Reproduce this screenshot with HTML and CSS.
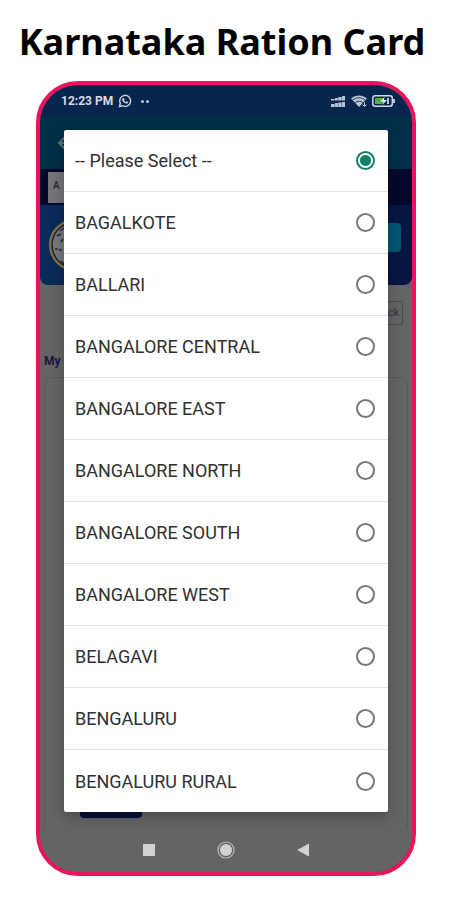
FILE: index.html
```html
<!DOCTYPE html>
<html lang="en">
<head>
<meta charset="utf-8">
<meta name="viewport" content="width=device-width, initial-scale=1">
<title>Karnataka Ration Card</title>
<link rel="stylesheet" href="styles.css">
</head>
<body>
<h1 class="title">Karnataka Ration Card</h1>
<main class="phone">
  <div class="app">
    <header class="status">
      <span>12:23 PM</span>
      <svg class="chat" viewBox="0 0 14 14" width="14" height="14" aria-hidden="true"><path d="M1.500 12.500l.8-3A5.500 5.500 0 1 1 4.500 11.700z" fill="none" stroke="#c3ccda" stroke-width="1.500"/><path d="M4.600 4.200l1.200-.3.800 1.700-.6.7c.5.9 1 1.300 1.800 1.700l.8-.8 1.600.9c-.2 1.300-1.200 1.800-2.400 1.400C5.700 8.800 4.300 7.200 4.100 5.700c0-.6.2-1.100.5-1.500z" fill="#c3ccda"/></svg>
      <span class="dots" aria-hidden="true"><i></i><i></i></span>
      <svg class="signal" viewBox="0 0 15 12" width="15" height="12" aria-hidden="true"><path d="M0 4h4V3h3V2h4V1h3v4.500H0zM0 9h4V8h3V7.500h4V7h3v5H0z" fill="#b9c3d3"/><path d="M3.700 0v12M7.200 0v12M10.700 0v12" stroke="#06264d" stroke-width=".4"/></svg>
      <svg viewBox="0 0 16 12" width="16" height="12" aria-hidden="true"><path d="M0 3.500C4.500-.5 11.500-.5 16 3.500L8 12z" fill="#b9c3d3"/><path d="M1.500 5.200C5.500 2 10.500 2 14.500 5.200M4 7.600c2.500-1.800 5.500-1.800 8 0" fill="none" stroke="#06264d" stroke-width=".8"/><path d="M13.500 7v4.500M11.500 9.500l2 2 2-2" fill="none" stroke="#b9c3d3"/></svg>
      <svg viewBox="0 0 24 12" width="24" height="12" aria-hidden="true"><rect x=".8" y=".8" width="19.500" height="10.400" rx="2.500" fill="none" stroke="#d0d7e0" stroke-width="1.500"/><path d="M3 3h9l-2 6H3z" fill="#55ad3a"/><path d="M12.500 2L8.500 6.500h3L10 10l5-5h-3z" fill="#fff"/><path d="M16 3v6M22 4v4" stroke="#d0d7e0" stroke-width="1.800"/></svg>
    </header>
    <div class="appbar"><svg viewBox="0 0 16 16" width="16" height="16" aria-hidden="true"><path d="M8 2L2 8l6 6M2 8h14" fill="none" stroke="#5f7077" stroke-width="2"/></svg></div>
    <div class="band"><span class="lang">A</span></div>
    <div class="hero">
      <svg viewBox="0 0 54 54" width="54" height="54" aria-hidden="true"><circle cx="27" cy="27" r="25" fill="#75777c" stroke="#87733a" stroke-width="2"/><circle cx="27" cy="27" r="23" fill="none" stroke="#1c2036" stroke-width="1.500"/><path d="M12 13l4-3M9 18l4-2M13 24l2-3M7 31h3m1 1h3M13 43l3 3" stroke="#22263a" stroke-width="1.500"/></svg>
      <span class="chip"></span>
    </div>
    <div class="toolbar"><span class="back">Back</span></div>
    <div class="heading">My Details</div>
    <div class="panel"><span class="submit"></span></div>
  </div>
  <div class="overlay">
    <form class="dialog" aria-label="District">
      <label class="row"><span>-- Please Select --</span><input type="radio" name="district" checked></label>
      <label class="row"><span>BAGALKOTE</span><input type="radio" name="district"></label>
      <label class="row"><span>BALLARI</span><input type="radio" name="district"></label>
      <label class="row"><span>BANGALORE CENTRAL</span><input type="radio" name="district"></label>
      <label class="row"><span>BANGALORE EAST</span><input type="radio" name="district"></label>
      <label class="row"><span>BANGALORE NORTH</span><input type="radio" name="district"></label>
      <label class="row"><span>BANGALORE SOUTH</span><input type="radio" name="district"></label>
      <label class="row"><span>BANGALORE WEST</span><input type="radio" name="district"></label>
      <label class="row"><span>BELAGAVI</span><input type="radio" name="district"></label>
      <label class="row"><span>BENGALURU</span><input type="radio" name="district"></label>
      <label class="row"><span>BENGALURU RURAL</span><input type="radio" name="district"></label>
    </form>
  </div>
  <nav class="nav">
    <button type="button" aria-label="Recent apps"><svg viewBox="0 0 18 18" width="18" height="18"><path d="M3 3h12v12H3z" fill="#d2d2d2"/></svg></button>
    <button type="button" aria-label="Home"><svg viewBox="0 0 18 18" width="18" height="18"><circle cx="9" cy="9" r="8" fill="none" stroke="#bcbcbc" stroke-width="1.200"/><circle cx="9" cy="9" r="6" fill="#d2d2d2"/></svg></button>
    <button type="button" aria-label="Back"><svg viewBox="0 0 18 18" width="18" height="18"><path d="M15 2.500v13L3 9z" fill="#d2d2d2"/></svg></button>
  </nav>
</main>
</body>
</html>
```
FILE: styles.css
```css
* { box-sizing: border-box; }
body {
  margin: 0;
  padding: 18px 34px 24px 36px;
  background: #fff;
  font-family: Roboto, sans-serif;
}
.title {
  display: flex;
  justify-content: center;
  margin: 0 -20px 15px -28px;
  font: 700 36px/48px "Noto Sans", sans-serif;
  color: #000;
  white-space: nowrap;
}
.phone {
  display: grid;
  grid-template: auto 44px / minmax(0, 1fr);
  border: 4px solid #e9145f;
  border-radius: 42px;
  overflow: hidden;
  background: #646464;
}
.app, .overlay { grid-area: 1 / 1; }
.app {
  display: flex;
  flex-direction: column;
  min-width: 0;
}
.status {
  display: flex;
  align-items: center;
  gap: 5px;
  height: 32px;
  padding: 0 16px 0 21px;
  background: #06264d;
  color: #d5dce6;
  font-size: 12px;
  font-weight: 700;
}
.dots { display: flex; gap: 2px; margin-left: 4px; }
.dots i { width: 3px; height: 3px; border-radius: 50%; background: #b9c3d3; }
.signal { margin-left: auto; }
.appbar {
  display: flex;
  align-items: center;
  height: 52px;
  padding-left: 17px;
  background: #022f48;
}
.band { height: 36px; padding: 3px 8px; background: #04092b; }
.lang {
  display: block;
  width: 60px;
  height: 31px;
  padding-left: 5px;
  background: #737478;
  color: #171719;
  font-size: 10px;
  line-height: 28px;
}
.hero {
  display: flex;
  align-items: center;
  justify-content: space-between;
  height: 80px;
  padding: 0 11px 0 8px;
  border-radius: 0 0 8px 8px;
  background: linear-gradient(90deg, #0a2b5a, #061541);
}
.chip { width: 50px; height: 29px; margin-bottom: 16px; border-radius: 4px; background: #04556f; }
.toolbar { display: flex; justify-content: flex-end; padding: 16px 9px 0; }
.back {
  height: 24px;
  padding: 0 3px 0 12px;
  border: 1px solid #454953;
  border-radius: 2px;
  color: #303642;
  font-size: 11px;
  line-height: 22px;
}
.heading {
  margin: 24px 4px 4px;
  color: #17173f;
  font-size: 12px;
  font-weight: 700;
  line-height: 24px;
}
.panel {
  display: flex;
  flex: 1;
  align-items: flex-end;
  margin: 0 4px;
  padding: 0 35px 10px;
  border: 1px solid #595959;
  border-bottom: 0;
  border-radius: 8px 8px 0 0;
}
.submit { width: 62px; height: 32px; border-radius: 4px; background: #070f38; }
.overlay { padding: 45px 24px 16px; }
.dialog {
  border-radius: 2px;
  background: #fff;
  box-shadow: 0 5px 14px rgba(0, 0, 0, .25);
}
.row {
  display: flex;
  align-items: center;
  justify-content: space-between;
  height: 62px;
  padding: 0 13px 0 11px;
  border-bottom: 1px solid #e3e3e3;
  color: #303030;
  font-size: 18px;
}
.row:last-child { border-bottom: 0; }
.row input {
  appearance: none;
  width: 19px;
  height: 19px;
  margin: 0;
  border: 2px solid #777;
  border-radius: 50%;
}
.row input:checked {
  border-color: #0f8169;
  background: radial-gradient(circle, #0f8169 5px, transparent 6px);
}
.nav {
  display: flex;
  align-items: center;
  justify-content: center;
  gap: 59px;
}
.nav button { display: flex; padding: 0; border: 0; background: none; }
```
